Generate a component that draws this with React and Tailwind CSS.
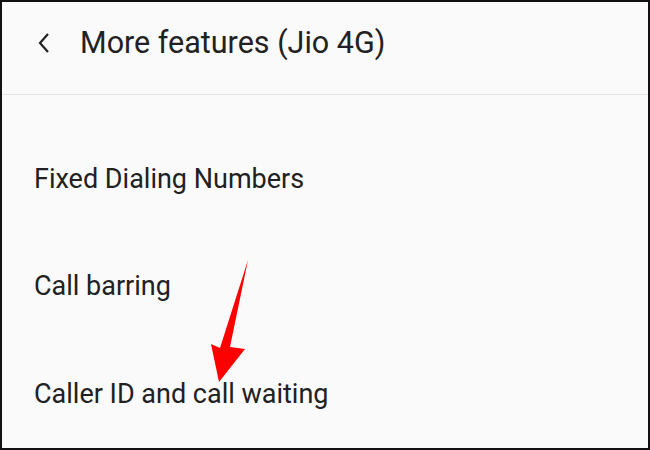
const items = ["Fixed Dialing Numbers", "Call barring", "Caller ID and call waiting"];

export default function App() {
  return (
    <div className="relative h-[450px] w-[650px] overflow-hidden border-2 border-[#111] bg-[#fafafa] font-['Roboto',sans-serif] text-[#212121]">
      <div className="flex h-[93px] items-center border-b border-[#e4e4e4] pl-[33px]">
        <svg width="20" height="24" viewBox="0 0 20 24" className="mb-[10px]">
          <path d="M13 3 L5 12 L13 21" fill="none" stroke="#222" strokeWidth="2.2" />
        </svg>
        <h1 className="mb-[9px] ml-[25px] text-[30.5px] leading-none">More features (Jio 4G)</h1>
      </div>
      <div className="flex flex-col pt-[30px]">
        {items.map((t) => (
          <div key={t} className="flex h-[107.5px] items-center pl-[32px] text-[27px]">
            {t}
          </div>
        ))}
      </div>
      <svg className="absolute left-0 top-0" width="650" height="450" viewBox="0 0 650 450">
        <path d="M246 258 L228 345 L243 347 L217 380 L209 342 L218 346 Z" fill="#f00" />
      </svg>
    </div>
  );
}
